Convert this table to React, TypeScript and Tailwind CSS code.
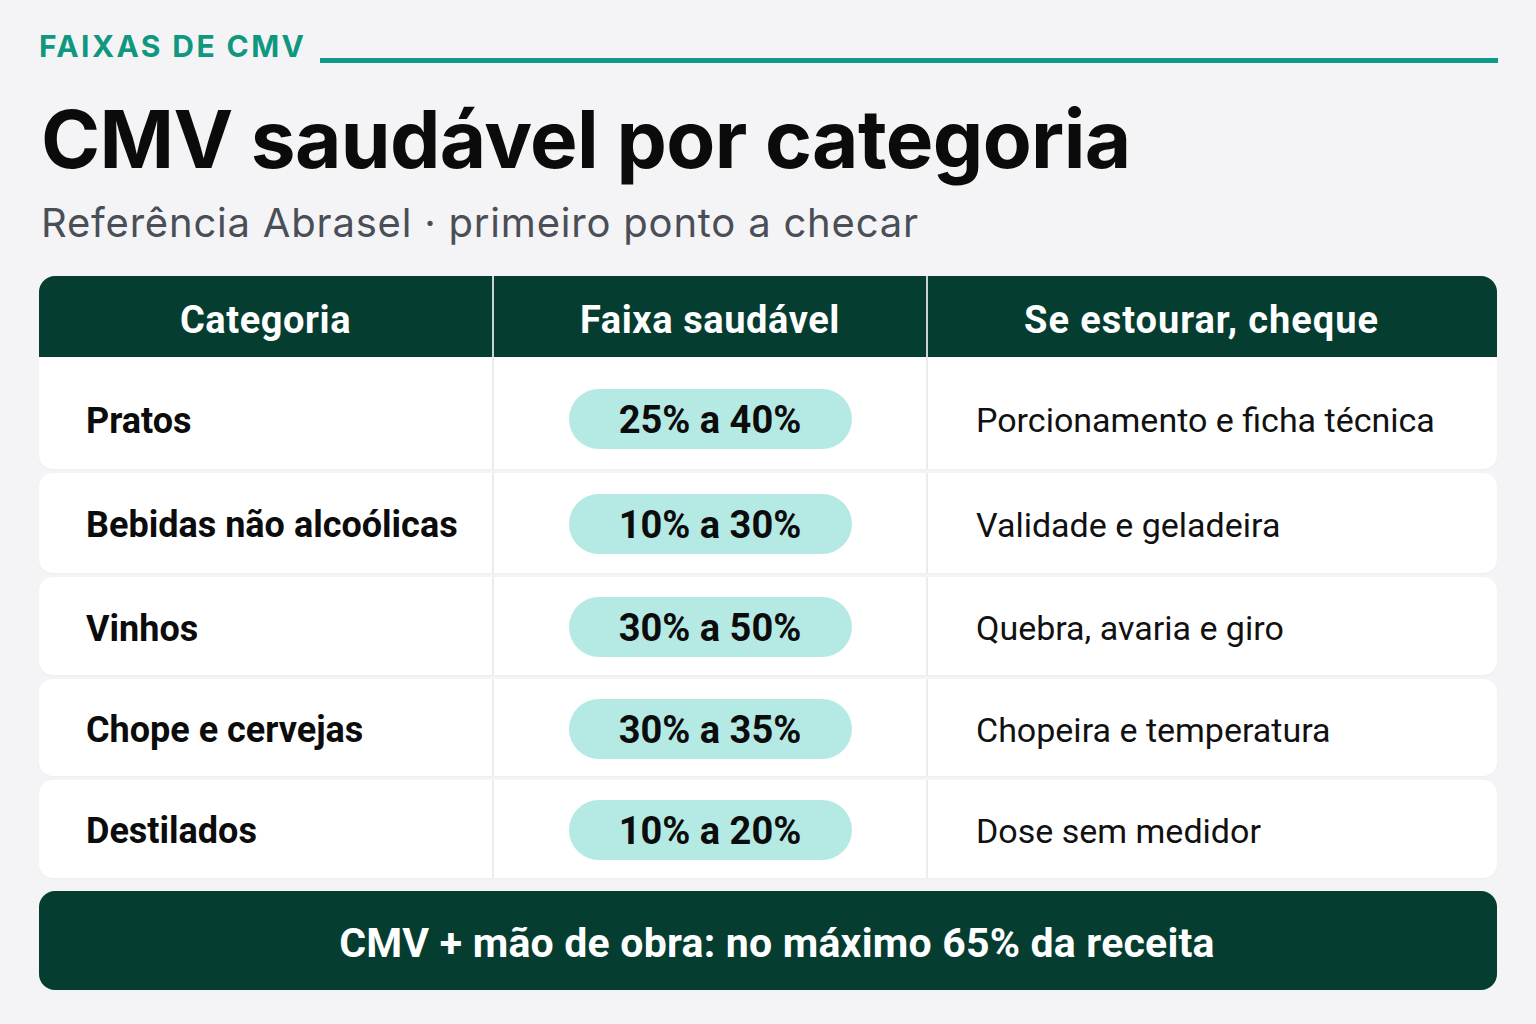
import React from "react";

const rows = [
  { cat: "Pratos", range: "25% a 40%", check: "Porcionamento e ficha técnica", h: "h-[112px]", tp: "pt-[15px]", pp: "pt-[12px]" },
  { cat: "Bebidas não alcoólicas", range: "10% a 30%", check: "Validade e geladeira", h: "h-[100px]", tp: "pt-[4px]", pp: "pt-[1px]" },
  { cat: "Vinhos", range: "30% a 50%", check: "Quebra, avaria e giro", h: "h-[98px]", tp: "pt-[5px]", pp: "pt-[2px]" },
  { cat: "Chope e cervejas", range: "30% a 35%", check: "Chopeira e temperatura", h: "h-[97px]", tp: "pt-[5px]", pp: "pt-[2px]" },
  { cat: "Destilados", range: "10% a 20%", check: "Dose sem medidor", h: "h-[98px]", tp: "pt-[4px]", pp: "pt-[1px]" },
];

export default function App() {
  return (
    <div className="w-[1536px] h-[1024px] bg-[#f4f4f6] px-[39px] pt-[28px] overflow-hidden font-['Inter',sans-serif]">
      <div className="flex items-center gap-[14px] h-[36px]">
        <div className="text-[30px] font-bold tracking-[0.08em] text-[#10977f] leading-none">
          FAIXAS DE CMV
        </div>
        <div className="flex-1 h-[5px] bg-[#11998a] mt-[28px] mr-[-1px]" />
      </div>
      <h1 className="mt-[35px] text-[80px] font-bold text-[#0b0b0b] leading-none tracking-[-0.008em] pl-[2px]">
        CMV saudável por categoria
      </h1>
      <div className="mt-[24px] text-[40px] text-[#4a4f57] leading-none tracking-[0.02em] pl-[2px]">
        Referência Abrasel · primeiro ponto a checar
      </div>

      <div className="mt-[33px] font-['Roboto',sans-serif]">
        <div className="grid grid-cols-[455px_434px_1fr] h-[81px] bg-[#063d31] rounded-t-[16px] text-white text-[38px] font-bold tracking-[0.015em]">
          <div className="flex items-center justify-center pt-[8px] border-r-2 border-[#c9d3d0]">Categoria</div>
          <div className="flex items-center justify-center pt-[8px] border-r-2 border-[#c9d3d0]">Faixa saudável</div>
          <div className="flex items-center justify-center pt-[8px] pr-[22px] tracking-[0.025em]">Se estourar, cheque</div>
        </div>
        <div className="flex flex-col gap-[4px]">
          {rows.map((r, i) => (
            <div
              key={r.cat}
              className={`grid grid-cols-[455px_434px_1fr] bg-white ${r.h} ${i === 0 ? "rounded-b-[14px]" : "rounded-[14px]"} shadow-[0_1px_2px_rgba(0,0,0,0.03)]`}
            >
              <div className={`flex items-center pl-[47px] ${r.tp} text-[36px] font-bold text-[#0c0c0c] border-r-2 border-[#ececee]`}>
                {r.cat}
              </div>
              <div className={`flex items-center justify-center ${r.pp} border-r-2 border-[#ececee]`}>
                <div className="w-[283px] h-[60px] rounded-full bg-[#b5e9e4] flex items-center justify-center pt-[3px] text-[38px] font-bold text-[#0c0c0c]">
                  {r.range}
                </div>
              </div>
              <div className={`flex items-center pl-[48px] ${r.tp} text-[34px] text-[#111111]`}>{r.check}</div>
            </div>
          ))}
        </div>
        <div className="mt-[13px] h-[99px] bg-[#063d31] rounded-[16px] flex items-center justify-center pl-[18px] pt-[6px] text-white text-[41px] font-bold tracking-[0.005em]">
          CMV + mão de obra: no máximo 65% da receita
        </div>
      </div>
    </div>
  );
}
